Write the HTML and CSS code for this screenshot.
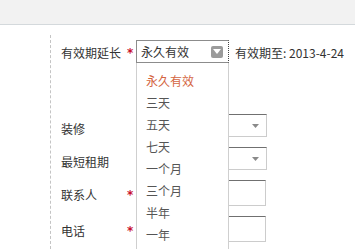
FILE: index.html
```html
<!DOCTYPE html>
<html lang="zh">
<head>
<meta charset="utf-8">
<link rel="stylesheet" href="styles.css">
</head>
<body>
<div class="topbar"></div>
<div class="main">
  <div class="row row-first">
    <span class="label">有效期延长</span><span class="star">*</span>
    <div class="select-wrap">
      <div class="select select-open">
        <span class="select-text">永久有效</span>
        <span class="arrow-box"><svg width="8" height="5" viewBox="0 0 8 5"><path d="M0 0H8L4 5Z" fill="#fff"/></svg></span>
      </div>
      <ul class="dropdown">
        <li class="active">永久有效</li>
        <li>三天</li>
        <li>五天</li>
        <li>七天</li>
        <li>一个月</li>
        <li>三个月</li>
        <li>半年</li>
        <li>一年</li>
      </ul>
    </div>
    <span class="expire">有效期至: 2013-4-24</span>
  </div>
  <div class="row row-select row-gap-big">
    <span class="label">装修</span><span class="star"></span>
    <div class="field select-plain"><svg class="tri" width="7" height="4" viewBox="0 0 7 4"><path d="M0 0H7L3.5 4Z" fill="#8a8a8a"/></svg></div>
  </div>
  <div class="row row-select">
    <span class="label">最短租期</span><span class="star"></span>
    <div class="field select-plain"><svg class="tri" width="7" height="4" viewBox="0 0 7 4"><path d="M0 0H7L3.5 4Z" fill="#8a8a8a"/></svg></div>
  </div>
  <div class="row row-text">
    <span class="label">联系人</span><span class="star">*</span>
    <div class="field textbox"></div>
  </div>
  <div class="row row-text">
    <span class="label">电话</span><span class="star">*</span>
    <div class="field textbox"></div>
  </div>
</div>
</body>
</html>
```
FILE: styles.css
```css
html, body {
  margin: 0;
  padding: 0;
  background: #fff;
}
body {
  width: 355px;
  height: 249px;
  overflow: hidden;
  font-family: "Noto Sans CJK SC", "Liberation Sans", sans-serif;
  font-size: 12px;
  color: #333;
}
.topbar {
  height: 24px;
  background: #f2f2f2;
  border-bottom: 1px solid #d4d9dc;
}
.main {
  margin-top: 10px;
  margin-left: 50px;
  padding-top: 5px;
  padding-left: 10px;
  border-left: 1px dashed #c4c4c4;
  height: 209px;
  overflow: hidden;
}
.row {
  display: flex;
  align-items: flex-start;
  margin-top: 10px;
}
.row-first {
  margin-top: 0;
}
.row-gap-big {
  margin-top: 51px;
}
.label {
  width: 66px;
  line-height: 16px;
  white-space: nowrap;
}
.star {
  width: 9px;
  color: #c8102e;
  font-weight: bold;
  line-height: 16px;
  font-family: "DejaVu Sans", sans-serif;
  font-size: 12px;
}
.row-first .label,
.row-first .star {
  padding-top: 5px;
}
.row-select .label,
.row-select .star {
  padding-top: 7px;
}
.row-text .label,
.row-text .star {
  padding-top: 7px;
}
.select-wrap {
  position: relative;
}
.select {
  box-sizing: border-box;
  width: 93px;
  height: 23px;
  border: 1px solid #8c8c8c;
  border-right: 1px dotted #444;
  display: flex;
  align-items: center;
  padding-left: 4px;
}
.select-text {
  flex: 1;
  line-height: 16px;
  color: #333;
}
.arrow-box {
  width: 12px;
  height: 12px;
  background: #9b9b9b;
  border-radius: 2px;
  margin-right: 5px;
  display: flex;
  align-items: center;
  justify-content: center;
}
.dropdown {
  position: absolute;
  left: 0;
  top: 23px;
  box-sizing: border-box;
  width: 93px;
  height: 200px;
  margin: 0;
  padding: 7px 0 0 0;
  list-style: none;
  background: #fff;
  border-left: 1px solid #cfcfcf;
  border-right: 1px solid #cfcfcf;
  z-index: 2;
}
.dropdown li {
  line-height: 22px;
  height: 22px;
  padding-left: 9px;
  color: #555;
}
.dropdown li.active {
  color: #d4653f;
}
.expire {
  margin-left: 6px;
  padding-top: 5px;
  line-height: 16px;
  color: #333;
}
.field {
  box-sizing: border-box;
  width: 131px;
  border: 1px solid #cccccc;
  border-top: 1px solid #707070;
}
.select-plain {
  height: 23px;
  display: flex;
  align-items: center;
  justify-content: flex-end;
  padding-right: 7px;
}
.textbox {
  width: 130px;
  height: 26px;
}
```
